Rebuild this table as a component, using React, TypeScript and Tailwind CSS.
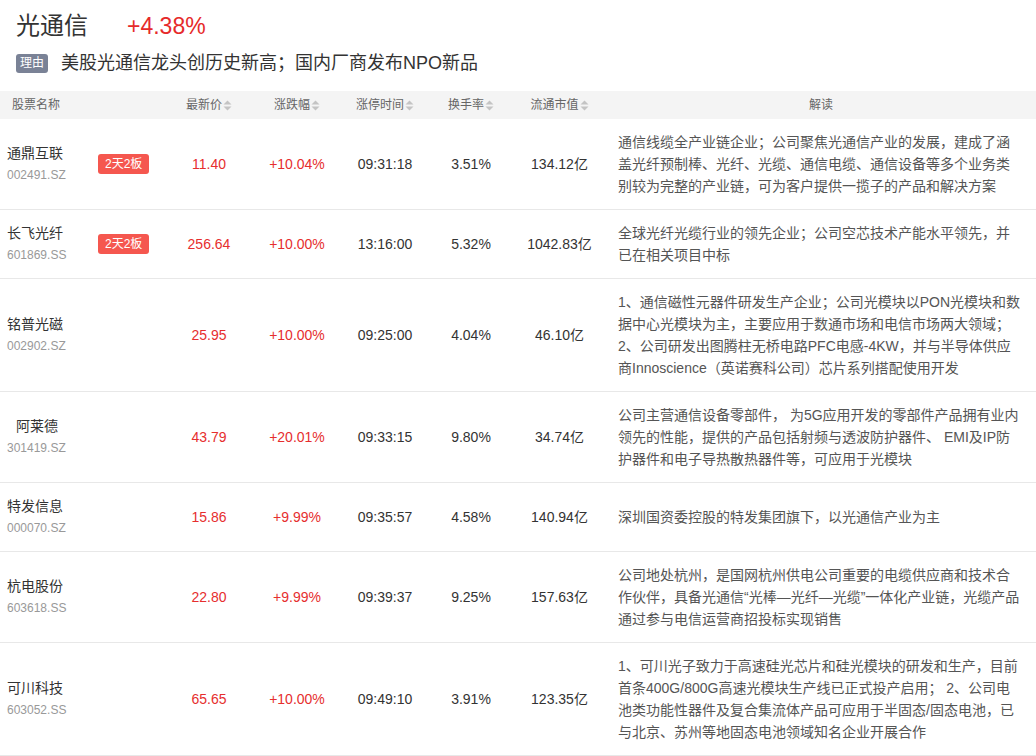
import React from "react";

type Row = {
  name: string;
  code: string;
  badge?: string;
  price: string;
  change: string;
  time: string;
  turnover: string;
  cap: string;
  note: string;
  indent?: boolean;
};

const rows: Row[] = [
  {
    name: "通鼎互联",
    code: "002491.SZ",
    badge: "2天2板",
    price: "11.40",
    change: "+10.04%",
    time: "09:31:18",
    turnover: "3.51%",
    cap: "134.12亿",
    note: "通信线缆全产业链企业；公司聚焦光通信产业的发展，建成了涵盖光纤预制棒、光纤、光缆、通信电缆、通信设备等多个业务类别较为完整的产业链，可为客户提供一揽子的产品和解决方案",
  },
  {
    name: "长飞光纤",
    code: "601869.SS",
    badge: "2天2板",
    price: "256.64",
    change: "+10.00%",
    time: "13:16:00",
    turnover: "5.32%",
    cap: "1042.83亿",
    note: "全球光纤光缆行业的领先企业；公司空芯技术产能水平领先，并已在相关项目中标",
  },
  {
    name: "铭普光磁",
    code: "002902.SZ",
    price: "25.95",
    change: "+10.00%",
    time: "09:25:00",
    turnover: "4.04%",
    cap: "46.10亿",
    note: "1、通信磁性元器件研发生产企业；公司光模块以PON光模块和数据中心光模块为主，主要应用于数通市场和电信市场两大领域；2、公司研发出图腾柱无桥电路PFC电感-4KW，并与半导体供应商Innoscience（英诺赛科公司）芯片系列搭配使用开发",
  },
  {
    name: "阿莱德",
    code: "301419.SZ",
    price: "43.79",
    change: "+20.01%",
    time: "09:33:15",
    turnover: "9.80%",
    cap: "34.74亿",
    indent: true,
    note: "公司主营通信设备零部件， 为5G应用开发的零部件产品拥有业内领先的性能，提供的产品包括射频与透波防护器件、 EMI及IP防护器件和电子导热散热器件等，可应用于光模块",
  },
  {
    name: "特发信息",
    code: "000070.SZ",
    price: "15.86",
    change: "+9.99%",
    time: "09:35:57",
    turnover: "4.58%",
    cap: "140.94亿",
    note: "深圳国资委控股的特发集团旗下，以光通信产业为主",
  },
  {
    name: "杭电股份",
    code: "603618.SS",
    price: "22.80",
    change: "+9.99%",
    time: "09:39:37",
    turnover: "9.25%",
    cap: "157.63亿",
    note: "公司地处杭州，是国网杭州供电公司重要的电缆供应商和技术合作伙伴，具备光通信“光棒—光纤—光缆”一体化产业链，光缆产品通过参与电信运营商招投标实现销售",
  },
  {
    name: "可川科技",
    code: "603052.SS",
    price: "65.65",
    change: "+10.00%",
    time: "09:49:10",
    turnover: "3.91%",
    cap: "123.35亿",
    note: "1、可川光子致力于高速硅光芯片和硅光模块的研发和生产，目前首条400G/800G高速光模块生产线已正式投产启用； 2、公司电池类功能性器件及复合集流体产品可应用于半固态/固态电池，已与北京、苏州等地固态电池领域知名企业开展合作",
  },
];

const cols = "grid grid-cols-[165px_88px_88px_88px_84px_93px_1fr]";

const SortIcon = () => (
  <svg width="9" height="11" viewBox="0 0 9 11" className="ml-[1px]">
    <path d="M4.5 0.5 L8.5 4.5 L0.5 4.5 Z" fill="#c4c4c4" />
    <path d="M0.5 6.5 L8.5 6.5 L4.5 10.5 Z" fill="#c4c4c4" />
  </svg>
);

const Th = ({ label }: { label: string }) => (
  <div className="flex items-center justify-center">
    <span>{label}</span>
    <SortIcon />
  </div>
);

export default function App() {
  return (
    <div className="w-[1036px] bg-white font-[family-name:Liberation_Sans,Noto_Sans_CJK_SC,sans-serif] text-[#333]">
      {/* 标题 */}
      <div className="px-4 pt-3">
        <div className="flex items-center h-7">
          <span className="text-[24px] leading-7 text-[#333]">光通信</span>
          <span className="ml-[39px] text-[23px] leading-7 text-[#e62a2a]">+4.38%</span>
        </div>
        <div className="flex items-center mt-[10px] h-[26px]">
          <span className="bg-[#7a8296] text-white text-[12px] leading-[19px] px-1 rounded-[3px]">理由</span>
          <span className="ml-[13px] text-[18px] text-[#333]">美股光通信龙头创历史新高；国内厂商发布NPO新品</span>
        </div>
      </div>

      {/* 表格 */}
      <div className="mt-[15px]">
        <div className={`${cols} h-7 items-center bg-[#f4f4f4] text-[12px] text-[#666]`}>
          <div className="pl-3">股票名称</div>
          <Th label="最新价" />
          <Th label="涨跌幅" />
          <Th label="涨停时间" />
          <Th label="换手率" />
          <Th label="流通市值" />
          <div className="text-center">解读</div>
        </div>

        {rows.map((r) => (
          <div key={r.code} className={`${cols} items-center py-3 border-b border-[#e8e8e8] text-[14px]`}>
            <div className="flex items-center pl-[7px]">
              <div className="w-[91px] flex flex-col leading-[22px]">
                <span className={r.indent ? "pl-[9px] text-[#333]" : "text-[#333]"}>{r.name}</span>
                <span className="text-[12px] text-[#999]">{r.code}</span>
              </div>
              {r.badge && (
                <span className="bg-[#f5574f] text-white text-[12px] leading-5 px-[7px] rounded-[3px]">{r.badge}</span>
              )}
            </div>
            <div className="text-center text-[#e62e2e]">{r.price}</div>
            <div className="text-center text-[#e62e2e]">{r.change}</div>
            <div className="text-center">{r.time}</div>
            <div className="text-center">{r.turnover}</div>
            <div className="text-center">{r.cap}</div>
            <div className="pl-3 pr-[15px] leading-[22px] text-[#555]">{r.note}</div>
          </div>
        ))}
      </div>
    </div>
  );
}
